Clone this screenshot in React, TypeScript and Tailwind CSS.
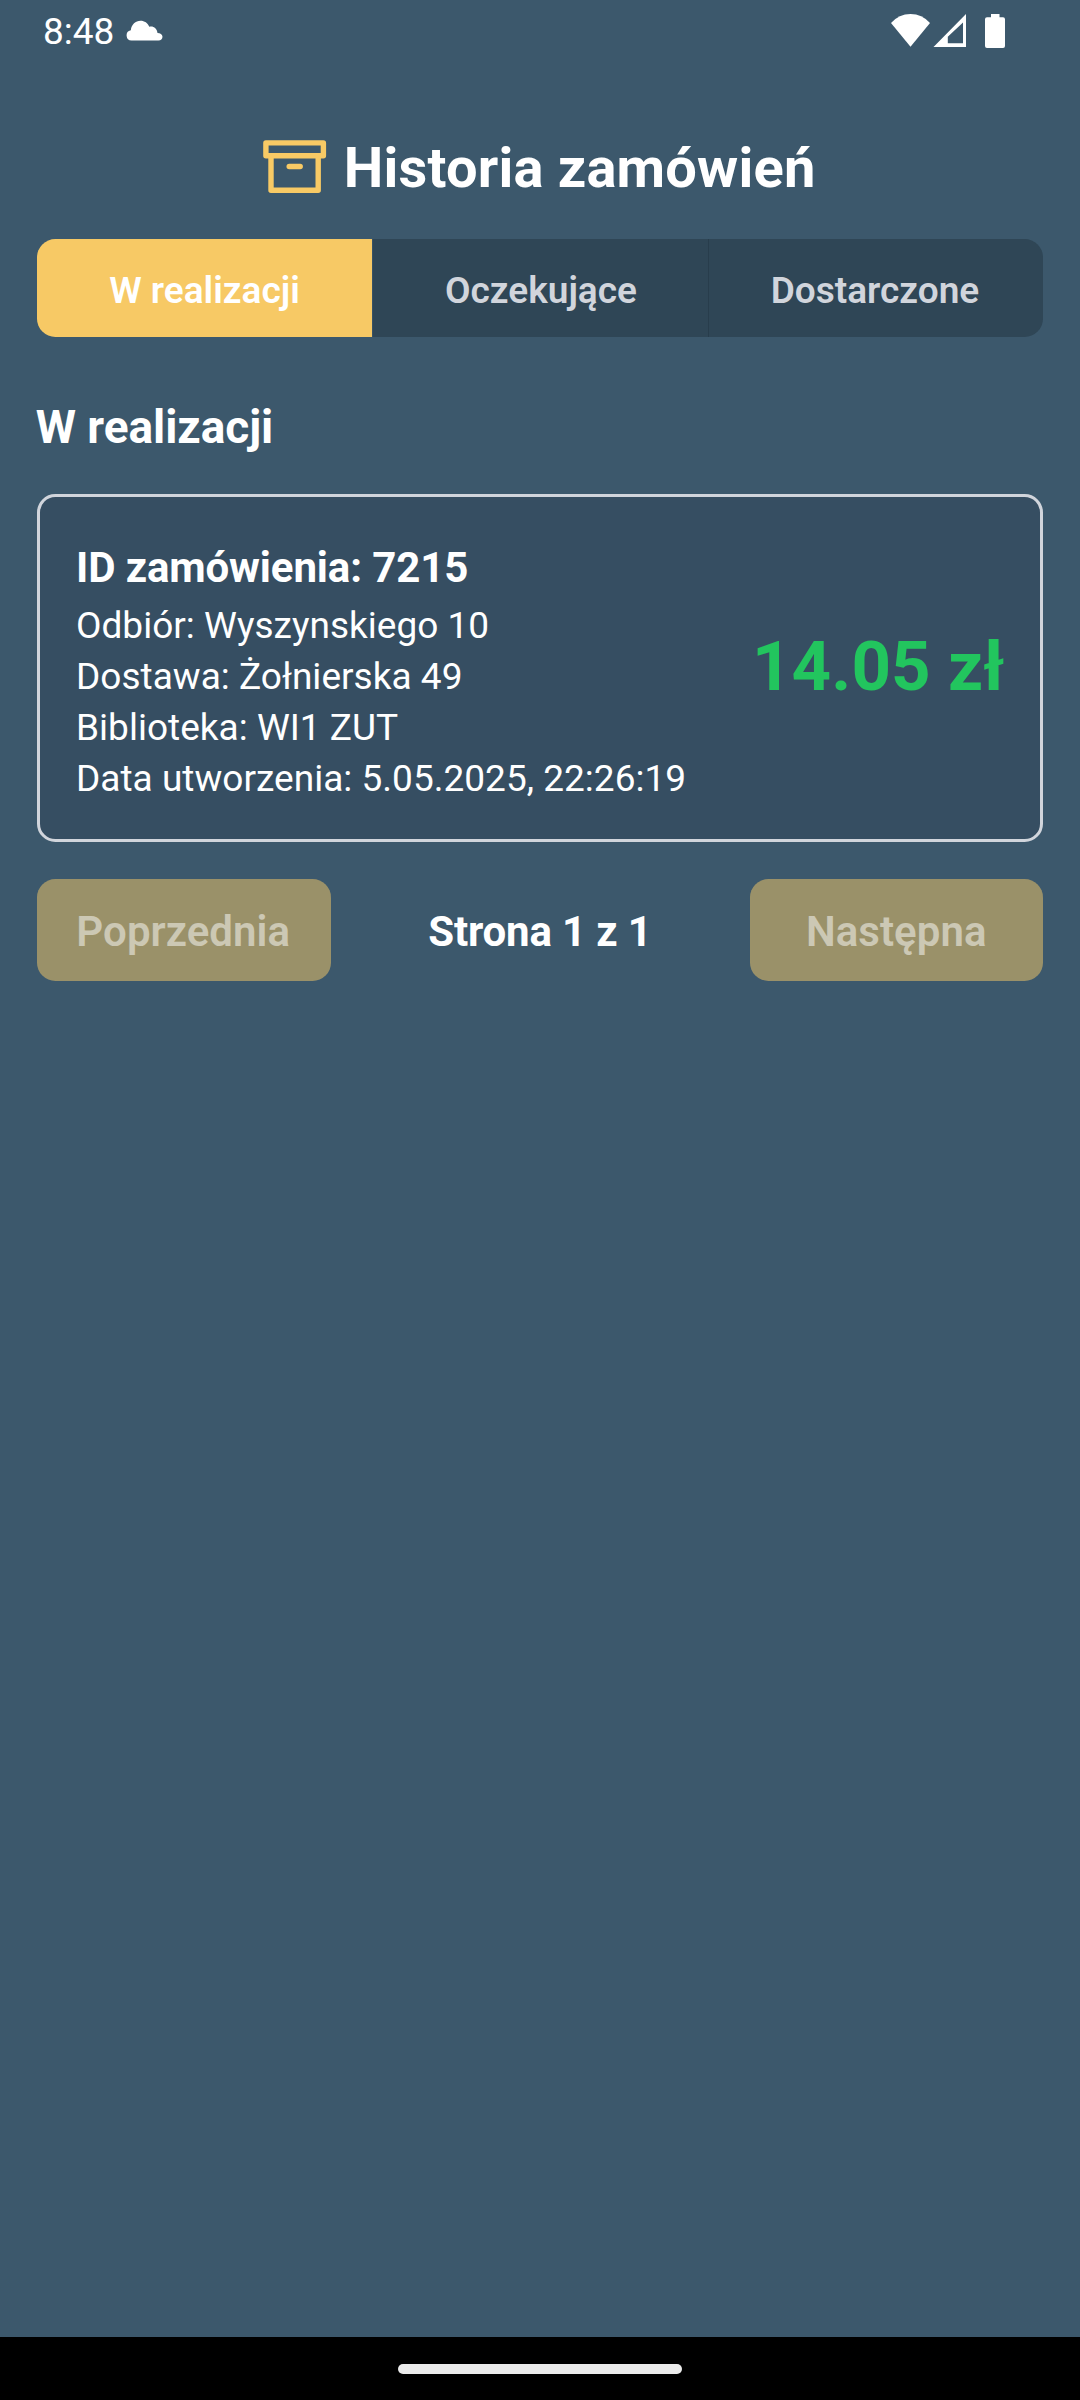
const tabs = [
  { label: "W realizacji", style: "bg-[#f7c965] text-white" },
  { label: "Oczekujące", style: "border-l border-[#385265] bg-[#2f4656] pl-px text-gray-300" },
  { label: "Dostarczone", style: "border-l border-[#283d4c] bg-[#2f4656] pr-[2px] text-gray-300" },
];

const details = [
  "Odbiór: Wyszynskiego 10",
  "Dostawa: Żołnierska 49",
  "Biblioteka: WI1 ZUT",
  "Data utworzenia: 5.05.2025, 22:26:19",
];

function StatusBar() {
  return (
    <div className="flex h-[63px] items-start justify-between text-white">
      <div className="flex items-start pl-[43px]">
        <span className="mt-[10px] text-[37px] leading-[44px]">8:48</span>
        <svg className="mt-[20px] ml-[11.500px] h-[21px] w-[37px]" viewBox="0 0 37 21" fill="currentColor">
          <path d="M5.5 20.5A5.2 5.2 0 0 1 4.8 10.2C5.5 4.5 9.5.8 14.5.8c4 0 7.300 2.200 8.800 6 4-1 7.700 1.500 8.200 6.200 2.700 0 5 1.300 5 3.800 0 2.200-1.700 3.700-4 3.700Z" />
        </svg>
      </div>
      <div className="mt-[13px] mr-[75px] flex items-start">
        <svg className="h-[36px] w-[41px]" viewBox="0 0 41 36" fill="currentColor">
          <path d="M1 10Q9 1 20.500 1T40 10L20.500 33.700Z" />
        </svg>
        <svg className="ml-[2px] h-[36px] w-[34px]" viewBox="0 0 34 36" fill="currentColor">
          <path fillRule="evenodd" d="M.500 34 33 1V34ZM14.800 23.800V30.300H30V9.500Z" />
        </svg>
        <svg className="ml-[18px] h-[36px] w-[20px]" viewBox="0 0 20 36" fill="currentColor">
          <path d="M6 1h8.500v3.300H18a2 2 0 0 1 2 2V33a2 2 0 0 1-2 2H2a2 2 0 0 1-2-2V6.300a2 2 0 0 1 2-2h4Z" />
        </svg>
      </div>
    </div>
  );
}

function ArchiveIcon() {
  return (
    <svg className="h-[54px] w-[64px]" viewBox="0 0 64 54" fill="none" stroke="#f8ca65" strokeWidth="5.400" strokeLinejoin="round">
      <rect x="2.900" y="2.900" width="57.500" height="12.800" />
      <path d="M8 16V50.300H55.200V16" />
      <path d="M26.200 26.500H37.200" strokeLinecap="round" />
    </svg>
  );
}

function PageButton({ label, className }: { label: string; className: string }) {
  return (
    <button
      disabled
      className={`h-[102px] rounded-[18.375px] bg-[#f7c965]/50 pr-px text-center text-[42px] leading-[106px] font-semibold tracking-[0.050px] text-white/50 ${className}`}
    >
      {label}
    </button>
  );
}

export default function App() {
  return (
    <div className="flex h-[2400px] w-[1080px] flex-col bg-[#3c586c] font-[Roboto,sans-serif] text-white">
      <StatusBar />
      <main className="flex flex-1 flex-col px-[36.75px]">
        <header className="mt-[68px] flex h-[74px] items-start pl-[226px]">
          <div className="mt-[8.500px]">
            <ArchiveIcon />
          </div>
          <h1 className="ml-[17px] text-[56px] leading-[74px] font-bold tracking-[0.2px]">Historia zamówień</h1>
        </header>

        <nav className="mt-[34px] grid h-[98px] grid-cols-3 overflow-hidden rounded-[18.375px]">
          {tabs.map((tab) => (
            <button
              key={tab.label}
              className={`text-center text-[37px] leading-[103px] font-semibold ${tab.style}`}
            >
              {tab.label}
            </button>
          ))}
        </nav>

        <h2 className="mt-[57px] -ml-px text-[46px] leading-[66px] font-bold tracking-[-0.050px]">W realizacji</h2>

        <section className="mt-[34px] flex h-[348px] items-center justify-between rounded-[18.375px] border-3 border-gray-300 bg-[#364e62] px-[36.75px]">
          <div>
            <h3 className="mt-[4px] -ml-[0.500px] text-[42px] leading-[60px] font-bold tracking-[-0.120px]">ID zamówienia: 7215</h3>
            <div className="relative top-[1.500px] -ml-[0.500px]">
              {details.map((line) => (
                <p key={line} className="text-[37px] leading-[51px] tracking-[0.020px]">
                  {line}
                </p>
              ))}
            </div>
          </div>
          <span className="-mt-[2px] -mr-px text-[69px] leading-[80px] font-bold tracking-[0.100px] text-[#22c55e]">14.05 zł</span>
        </section>

        <div className="mt-[37px] flex h-[102px] items-center justify-between">
          <PageButton label="Poprzednia" className="w-[294px]" />
          <span className="h-[102px] pr-px text-[42px] leading-[106px] font-bold tracking-[-0.150px]">Strona 1 z 1</span>
          <PageButton label="Następna" className="w-[293px]" />
        </div>
      </main>
      <footer className="flex h-[63px] items-start justify-center bg-black pt-[27px]">
        <div className="h-[10px] w-[284px] rounded-full bg-[#ebebeb]" />
      </footer>
    </div>
  );
}
